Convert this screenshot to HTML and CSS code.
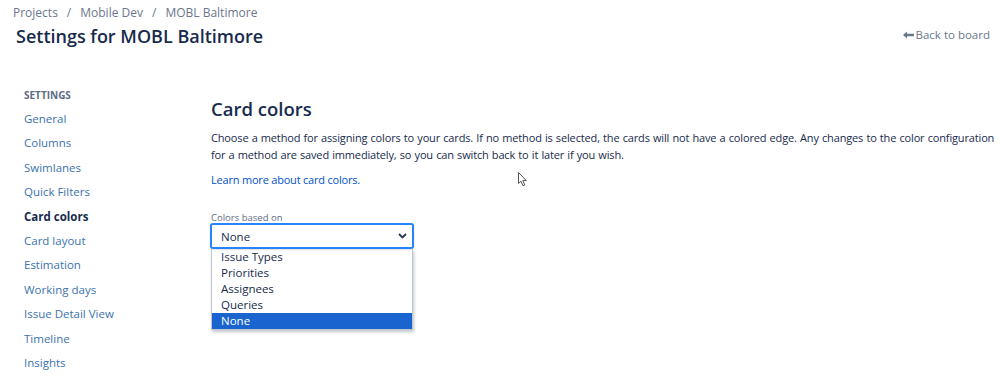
FILE: index.html
```html
<!DOCTYPE html>
<html>
  <head>
  <meta name="viewport" content="width=device-width, initial-scale=1.0">
  <meta charset="UTF-8">
  <link rel="stylesheet" href="styles.css">
  </head>
<body>

<div id="page-header">
    <div id="breadcrumbs">
        <a href="#">Projects</a><span class="sep">/</span><a href="#">Mobile Dev</a><span class="sep">/</span><a href="#">MOBL Baltimore</a>
    </div>
    <div id="title-row">
        <h1>Settings for MOBL Baltimore</h1>
        <a id="back-to-board" href="#"><svg width="11" height="8" viewBox="0 0 11 8"><path d="M0 4 L4 0.5 L4 2.8 L11 2.8 L11 5.2 L4 5.2 L4 7.5 Z" fill="#6b778c"/></svg>Back to board</a>
    </div>
</div>

<div id="settings-body">
    <div id="settings-nav">
        <div class="nav-heading">SETTINGS</div>
        <a class="nav-item" href="#">General</a>
        <a class="nav-item" href="#">Columns</a>
        <a class="nav-item" href="#">Swimlanes</a>
        <a class="nav-item" href="#">Quick Filters</a>
        <a class="nav-item current" href="#">Card colors</a>
        <a class="nav-item" href="#">Card layout</a>
        <a class="nav-item" href="#">Estimation</a>
        <a class="nav-item" href="#">Working days</a>
        <a class="nav-item" href="#">Issue Detail View</a>
        <a class="nav-item" href="#">Timeline</a>
        <a class="nav-item" href="#">Insights</a>
    </div>

    <div id="settings-content">
        <h2>Card colors</h2>
        <p class="description">Choose a method for assigning colors to your cards. If no method is selected, the cards will not have a colored edge. Any changes to the color configuration for a method are saved immediately, so you can switch back to it later if you wish.</p>
        <a class="learn-more" href="#">Learn more about card colors.</a>

        <div class="field">
            <label>Colors based on</label>
            <div class="select-wrap">
                <div class="select-box">
                    <span>None</span>
                    <svg width="9" height="6" viewBox="0 0 9 6"><path d="M1 1 L4.5 4.5 L8 1" fill="none" stroke="#253858" stroke-width="1.8"/></svg>
                </div>
                <ul class="select-options">
                    <li>Issue Types</li>
                    <li>Priorities</li>
                    <li>Assignees</li>
                    <li>Queries</li>
                    <li class="selected">None</li>
                </ul>
            </div>
        </div>

        <svg class="mouse-cursor" width="10" height="15" viewBox="0 0 10 15"><path d="M0.5 0.5 L0.5 11.5 L3 9.2 L5 13.8 L6.8 13 L4.8 8.6 L8.3 8.6 Z" fill="#fff" stroke="#555" stroke-width="1"/></svg>
    </div>
</div>

</body>
</html>
```

FILE: styles.css
```css
body{
margin: 0;
font-family: "Open Sans", "Noto Sans", sans-serif;
color: #172b4d;
background-color: #fff;
}

a{
text-decoration: none;
}

#page-header{
padding: 5px 9px 0 13px;
}

#breadcrumbs{
font-size: 12px;
line-height: 16px;
}

#breadcrumbs a{
color: #6b778c;
}

#breadcrumbs .sep{
color: #6b778c;
margin: 0 9px;
}

#title-row{
display: flex;
justify-content: space-between;
align-items: flex-start;
margin-top: 2px;
}

h1{
margin: 0 0 0 3px;
font-size: 18px;
font-weight: 600;
line-height: 26px;
}

#back-to-board{
color: #6b778c;
font-size: 11.5px;
line-height: 16px;
margin-top: 4px;
display: flex;
align-items: center;
gap: 2px;
}

#settings-body{
display: flex;
padding: 38px 0 0 24px;
}

#settings-nav{
width: 187px;
flex-shrink: 0;
display: flex;
flex-direction: column;
}

.nav-heading{
font-size: 10px;
font-weight: 700;
color: #5e6c84;
line-height: 16px;
margin-bottom: 8px;
}

.nav-item{
font-size: 11.5px;
color: #3b73af;
line-height: 16px;
margin-bottom: 8.4px;
}

.nav-item.current{
color: #172b4d;
font-weight: 700;
}

#settings-content{
flex: 1;
position: relative;
}

h2{
margin: 9px 0 0 0;
font-size: 18.5px;
font-weight: 600;
line-height: 26px;
}

.description{
margin: 7px 0 0 0;
padding-right: 3px;
font-size: 11px;
letter-spacing: -0.15px;
word-spacing: 0.5px;
line-height: 17px;
}

.learn-more{
display: inline-block;
margin-top: 8px;
font-size: 11px;
letter-spacing: -0.2px;
line-height: 17px;
color: #0052cc;
}

.field{
margin-top: 23px;
}

.field label{
display: block;
font-size: 9.5px;
line-height: 11px;
color: #5e6c84;
}

.select-wrap{
width: 204px;
margin-left: -1px;
}

.select-box{
height: 26px;
box-sizing: border-box;
border: 2px solid #2684ff;
border-radius: 3px;
display: flex;
align-items: center;
justify-content: space-between;
padding: 0 5px 0 9px;
font-size: 11.5px;
box-shadow: 0 1px 2px rgba(9,30,66,0.15);
}

.select-options{
list-style: none;
margin: 0 1px 0 1px;
padding: 0;
border: 1px solid #c1c7d0;
border-top: none;
box-shadow: 1px 2px 3px rgba(9,30,66,0.25);
}

.select-options li{
font-size: 11.5px;
line-height: 16px;
padding-left: 9px;
}

.select-options li.selected{
background-color: #1a64d0;
color: #fff;
}

.mouse-cursor{
position: absolute;
left: 307px;
top: 85px;
}
```
